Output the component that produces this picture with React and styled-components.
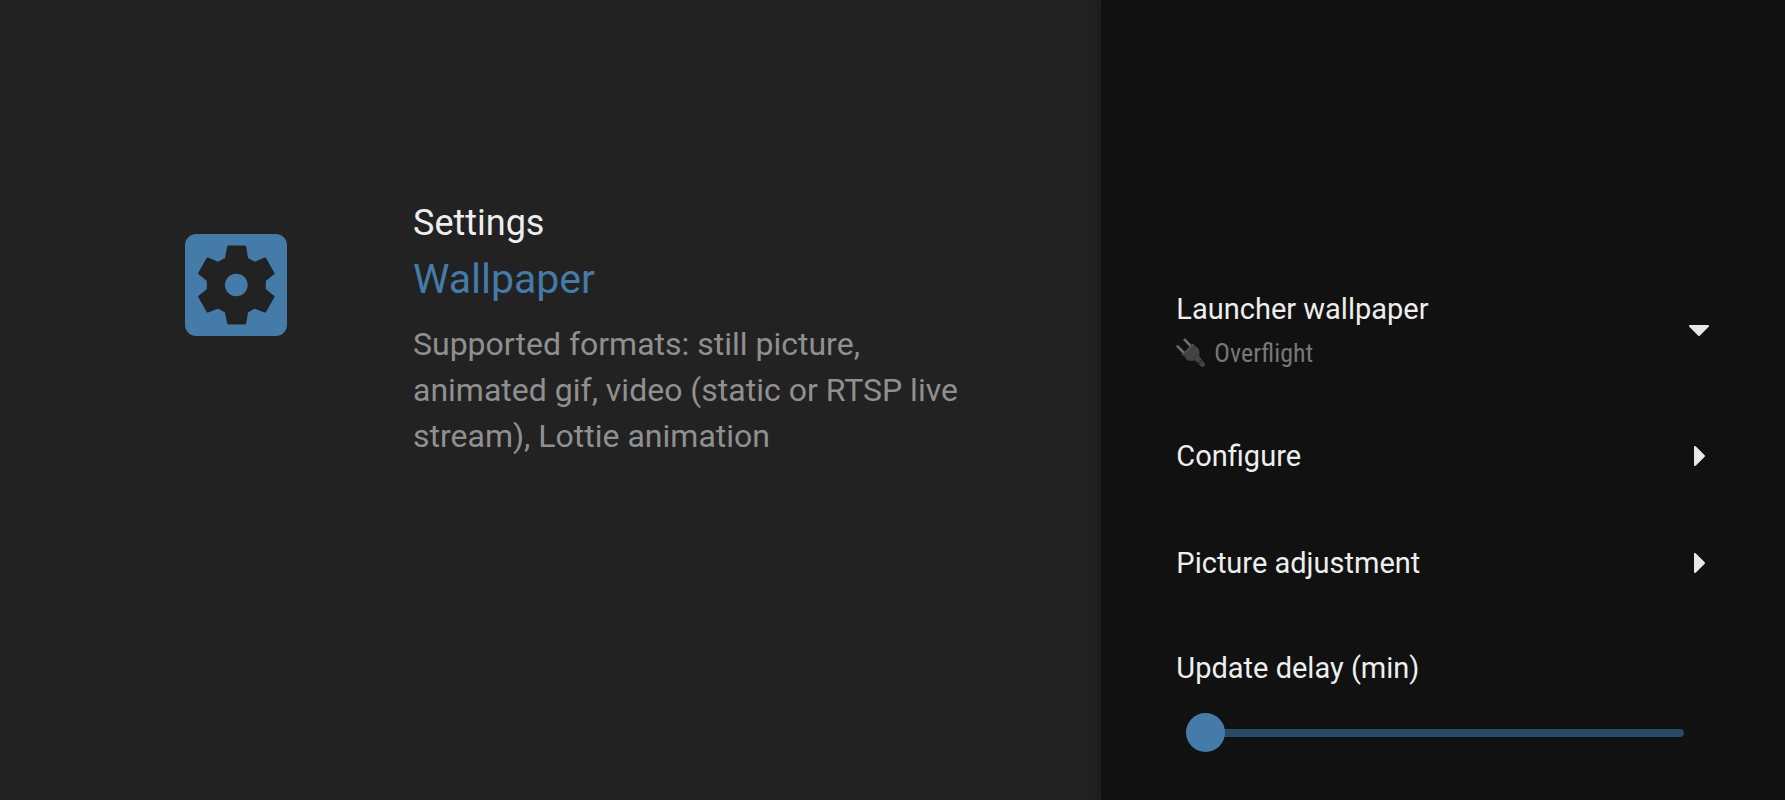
import React, { useState } from "react";
import styled, { createGlobalStyle } from "styled-components";

const rows = [
  { title: "Configure" },
  { title: "Picture adjustment" },
];

function GearIcon() {
  return (
    <GearS viewBox="0 0 306 306" aria-hidden="true">
      <rect width="306" height="306" rx="34" fill="#457ba9" />
      <path
        d="M130 38H180L186 74L209 87L240 74L265 118L239 139V167L265 188L240 232L209 220L186 233L180 268H130L123 233L99 220L68 232L43 188L69 167V139L43 118L68 74L99 87L123 74Z"
        fill="#222" stroke="#222" strokeWidth="7" strokeLinejoin="round"
      />
      <circle cx="154" cy="153" r="34" fill="#457ba9" />
    </GearS>
  );
}

function PlugIcon() {
  return (
    <PlugS viewBox="0 0 90 90" aria-hidden="true">
      <path d="M5 25L24 45M26 5L44 24" stroke="#6a6a6a" strokeWidth="8" strokeLinecap="round" />
      <path d="M22 50L52 20L66 30C72 40 72 49 68 58L59 67C48 70 37 70 30 63Z" fill="#424242" />
      <path d="M56 66L69 54L77 64L66 76Z" fill="#4a4a4a" />
      <path d="M67 77L78 66L86 76Q89 84 82 87Q75 89 67 77Z" fill="#424242" />
      <path d="M21 50L51 20" fill="none" stroke="#505050" strokeWidth="6" strokeLinecap="round" />
      <path d="M32 62Q50 58 63 31" fill="none" stroke="#4c4c4c" strokeWidth="3" strokeLinecap="round" />
      <path d="M60 72L74 59M68 80L80 68" stroke="#2a2a2a" strokeWidth="2" />
    </PlugS>
  );
}

function Arrow({ down }) {
  return (
    <ArrowS viewBox="0 0 40 40" aria-hidden="true">
      {down
        ? <path d="M11 15H29L20 24Z" />
        : <path d="M16 11V29L25 20Z" />}
    </ArrowS>
  );
}

function App() {
  const [delay, setDelay] = useState(0);

  return (
    <PageS>
      <GlobalS />
      <GuideS>
        <GearIcon />
        <GuideTextS>
          <CrumbS>Settings</CrumbS>
          <TitleS>Wallpaper</TitleS>
          <DescS>
            Supported formats: still picture, animated gif, video (static or RTSP live stream), Lottie animation
          </DescS>
        </GuideTextS>
      </GuideS>

      <PanelS>
        <RowS $tall>
          <RowTextS>
            Launcher wallpaper
            <ValueS><PlugIcon />Overflight</ValueS>
          </RowTextS>
          <Arrow down />
        </RowS>
        {rows.map((row) => (
          <RowS key={row.title}>
            <RowTextS>{row.title}</RowTextS>
            <Arrow />
          </RowS>
        ))}
        <SliderRowS>
          <LabelS htmlFor="delay">Update delay (min)</LabelS>
          <SliderS
            id="delay"
            type="range"
            min="0"
            max="60"
            value={delay}
            onChange={(e) => setDelay(Number(e.target.value))}
          />
        </SliderRowS>
      </PanelS>
    </PageS>
  );
}

export default App;

const GlobalS = createGlobalStyle`
  * {
    box-sizing: border-box;
  }
  body {
    margin: 0;
    background-color: #222;
    font-family: Roboto, "Liberation Sans", sans-serif;
  }`

const PageS = styled.div`
  display: flex;
  min-height: 100vh;`

const GuideS = styled.main`
  flex: 1;
  display: flex;
  align-items: flex-start;
  gap: 126px;
  padding: 200px 120px 40px 185px;
  background-color: #222;`

const GearS = styled.svg`
  flex: none;
  width: 102px;
  height: 102px;
  margin-top: 34px;`

const GuideTextS = styled.div`
  flex: 1;`

const CrumbS = styled.div`
  font-size: 36px;
  line-height: 46px;
  color: #eee;`

const TitleS = styled.h1`
  margin: 5px 0 14px;
  font-size: 41px;
  line-height: 56px;
  font-weight: 400;
  color: #457ba9;`

const DescS = styled.p`
  margin: 0;
  max-width: 560px;
  font-size: 32px;
  line-height: 46px;
  color: #909090;`

const PanelS = styled.aside`
  width: 38.3%;
  display: flex;
  flex-direction: column;
  padding: 256px 66px 40px 75px;
  background-color: #111;
  box-shadow: 0 0 10px rgba(0, 0, 0, 0.3);`

const RowS = styled.button`
  display: flex;
  align-items: center;
  justify-content: space-between;
  min-height: ${({ $tall }) => ($tall ? 146 : 107)}px;
  padding: ${({ $tall }) => ($tall ? "4px 0 0" : "0")};
  border: none;
  background: none;
  font: inherit;
  text-align: left;
  cursor: pointer;`

const RowTextS = styled.span`
  display: flex;
  flex-direction: column;
  gap: 6px;
  font-size: 29px;
  line-height: 38px;
  color: #eee;`

const ValueS = styled.span`
  display: flex;
  align-items: center;
  gap: 8px;
  font-family: "Roboto Condensed", "Liberation Sans Narrow", Roboto, sans-serif;
  font-size: 26px;
  color: #777;`

const PlugS = styled.svg`
  width: 30px;
  height: 30px;
  fill: none;`

const ArrowS = styled.svg`
  flex: none;
  width: 40px;
  height: 40px;
  fill: #e8e8e8;
  stroke: #e8e8e8;
  stroke-width: 2;
  stroke-linejoin: round;`

const SliderRowS = styled.div`
  display: flex;
  flex-direction: column;
  gap: 26px;
  padding: 33px 35px 0 0;`

const LabelS = styled.label`
  font-size: 29px;
  line-height: 38px;
  color: #eee;`

const SliderS = styled.input`
  appearance: none;
  height: 40px;
  margin: 0 0 0 10px;
  background: none;
  cursor: pointer;

  &::-webkit-slider-runnable-track {
    height: 8px;
    border-radius: 4px;
    background-color: #294a63;
  }
  &::-webkit-slider-thumb {
    appearance: none;
    width: 39px;
    height: 39px;
    margin-top: -16px;
    border-radius: 50%;
    background-color: #457ba9;
  }`
